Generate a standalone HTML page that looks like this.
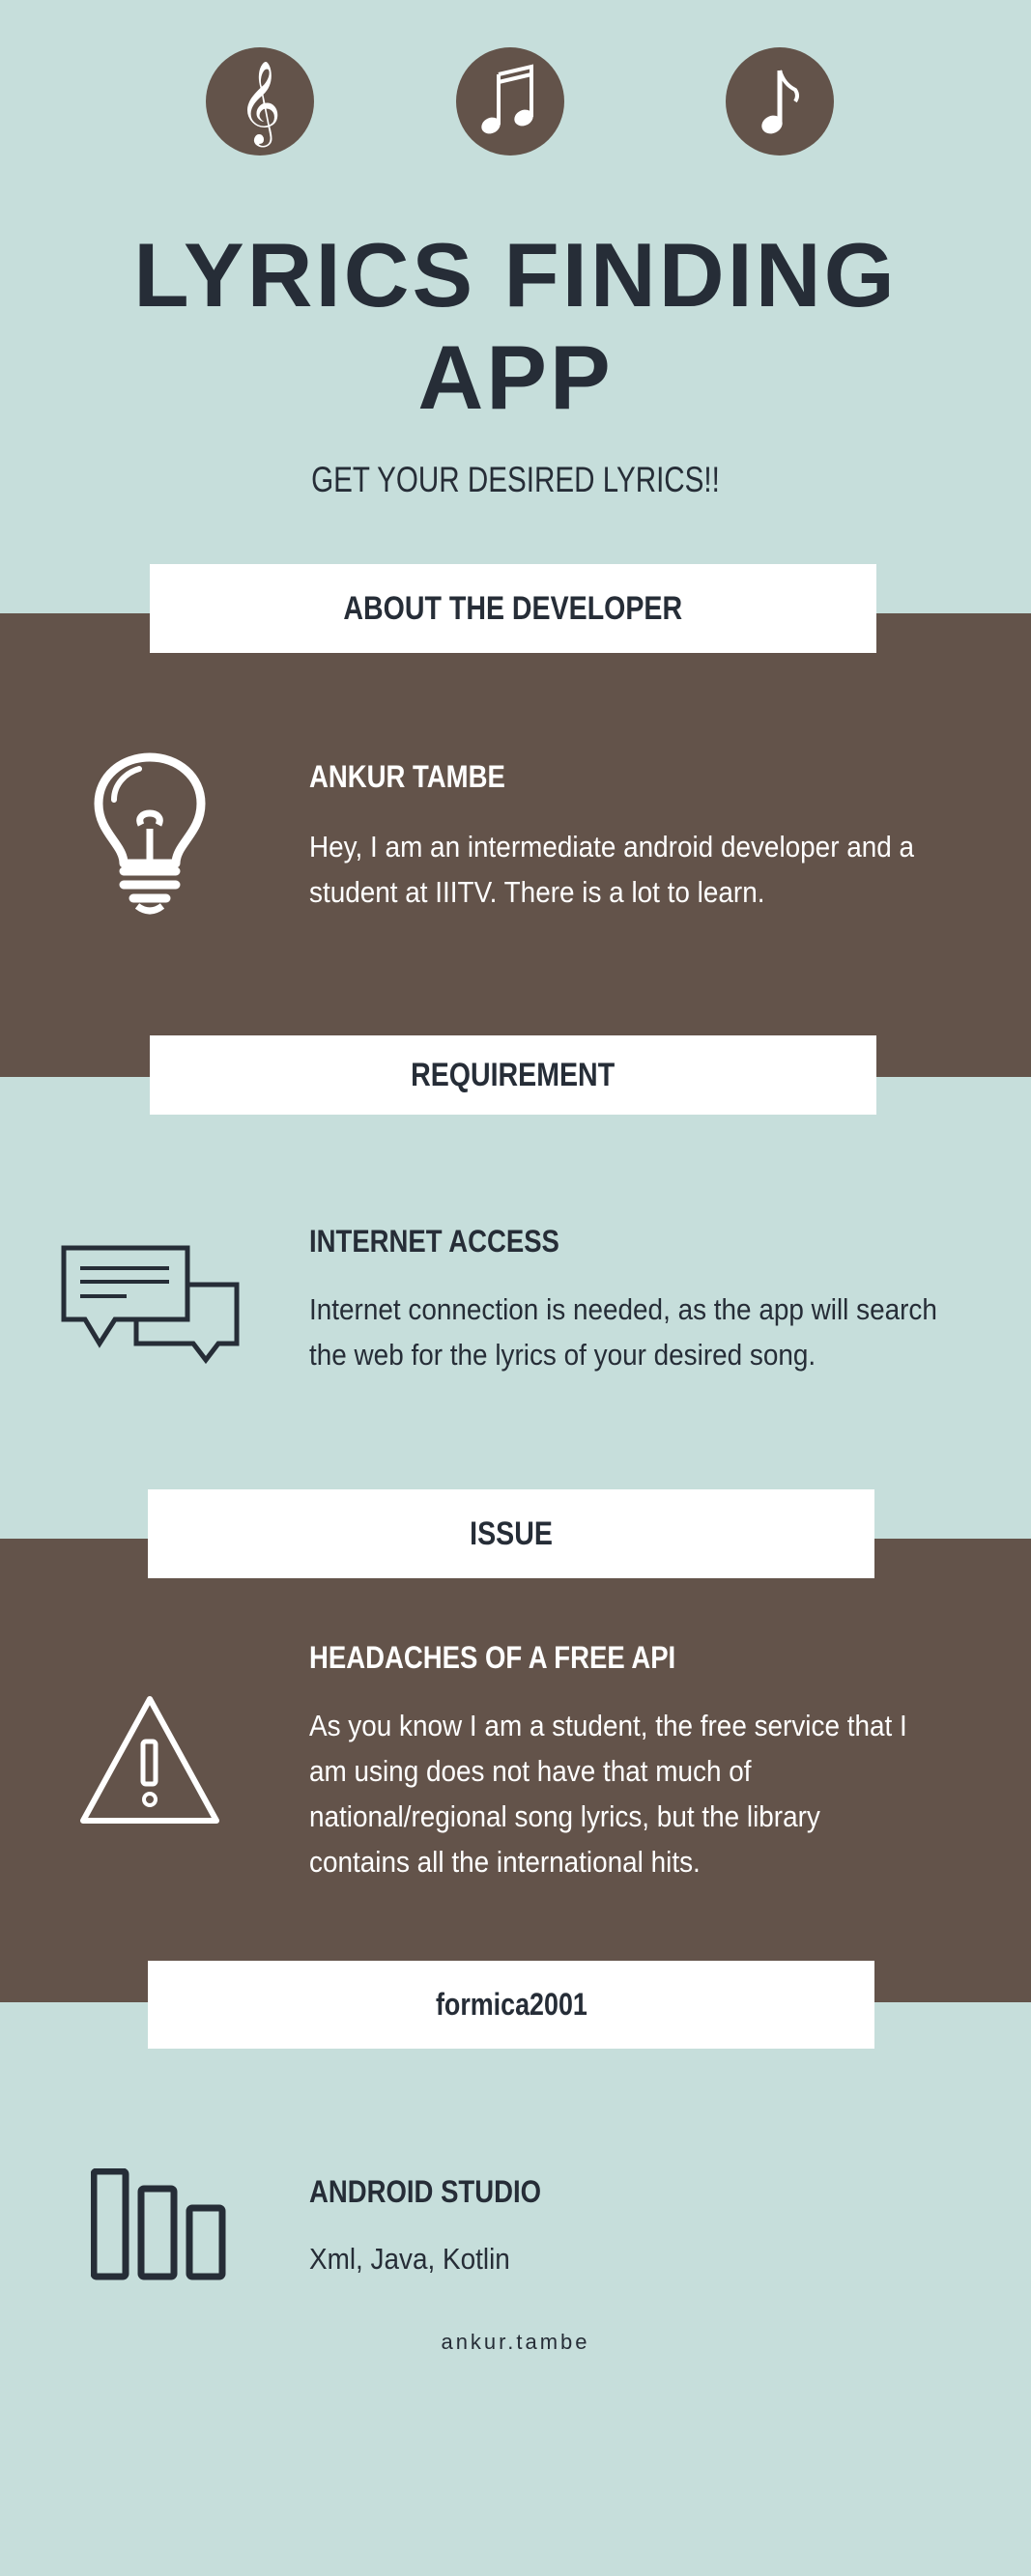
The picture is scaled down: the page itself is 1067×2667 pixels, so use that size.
<!DOCTYPE html>
<html><head><meta charset="utf-8">
<style>
*{margin:0;padding:0;box-sizing:border-box}
body{width:1067px;height:2667px;background:#c6dedb;position:relative;overflow:hidden;font-family:"Liberation Sans",sans-serif;color:#262d37}
.abs{position:absolute}
.band{position:absolute;left:0;width:1067px;background:#63534a}
.circ{position:absolute;width:112px;height:112px;border-radius:50%;background:#63534a;top:49px}
.box{position:absolute;left:155px;width:752px;background:#fff;text-align:center;font-weight:bold;font-size:34px;display:flex;align-items:center;justify-content:center}
.box span{display:inline-block;transform:scaleX(0.84)}
.h{position:absolute;left:320px;font-weight:bold;font-size:32px;transform:scaleX(0.86);transform-origin:left top;white-space:nowrap}
.p{position:absolute;left:320px;font-size:31px;line-height:47px;white-space:nowrap;transform:scaleX(0.9);transform-origin:left top}
.w{color:#fff}
.title{position:absolute;left:0;width:1067px;text-align:center;font-weight:bold;font-size:94px;line-height:105px;letter-spacing:3px}
</style></head><body>
<div class="circ" style="left:213px"><svg width="112" height="112" viewBox="0 0 112 112"><text x="56" y="82" text-anchor="middle" font-size="74" fill="#fff" font-family="DejaVu Sans">𝄞</text></svg></div>
<div class="circ" style="left:472px"><svg width="112" height="112" viewBox="0 0 112 112"><path d="M44 28 L78 20 L78 72" stroke="#fff" stroke-width="4" fill="none"/><path d="M44 28 L44 80" stroke="#fff" stroke-width="4"/><path d="M44 36 L78 28" stroke="#fff" stroke-width="4"/><ellipse cx="36" cy="81" rx="10" ry="8" fill="#fff" transform="rotate(-25 36 81)"/><ellipse cx="70" cy="73" rx="10" ry="8" fill="#fff" transform="rotate(-25 70 73)"/></svg></div>
<div class="circ" style="left:751px"><svg width="112" height="112" viewBox="0 0 112 112"><path d="M56 24 L56 78" stroke="#fff" stroke-width="5"/><path d="M56 24 Q60 38 72 44 Q76 50 72 56" stroke="#fff" stroke-width="4" fill="none"/><ellipse cx="48" cy="80" rx="11" ry="9" fill="#fff" transform="rotate(-25 48 80)"/></svg></div>

<div class="title" style="top:232px">LYRICS FINDING</div>
<div class="title" style="top:338px">APP</div>
<div class="abs" style="top:476px;left:0;width:1067px;text-align:center;font-size:37px;transform:scaleX(0.8)">GET YOUR DESIRED LYRICS!!</div>

<div class="band" style="top:635px;height:480px"></div>
<div class="box" style="top:584px;height:92px"><span>ABOUT THE DEVELOPER</span></div>
<svg class="abs" style="left:94px;top:778px" width="122" height="172" viewBox="0 0 122 172"><path d="M34 116 C34 96 8 84 8 54 C8 26 32 6 61 6 C90 6 114 26 114 54 C114 84 88 96 88 116 Z" fill="none" stroke="#fff" stroke-width="9" stroke-linejoin="round"/><path d="M61 116 L61 80 M52 76 C44 60 78 60 70 76" fill="none" stroke="#fff" stroke-width="7"/><path d="M24 50 C24 34 36 22 50 18" fill="none" stroke="#fff" stroke-width="6" stroke-linecap="round"/><path d="M34 124 L88 124 M34 138 L88 138 M44 152 L78 152" stroke="#fff" stroke-width="9" stroke-linecap="round"/><path d="M48 160 Q61 170 74 160" fill="none" stroke="#fff" stroke-width="7"/></svg>
<div class="h w" style="top:786px">ANKUR TAMBE</div>
<div class="p w" style="top:853px">Hey, I am an intermediate android developer and a<br>student at IIITV. There is a lot to learn.</div>

<div class="box" style="top:1072px;height:82px"><span>REQUIREMENT</span></div>
<svg class="abs" style="left:63px;top:1289px" width="190" height="125" viewBox="0 0 190 125"><path d="M131 41 L182 41 L182 102 L163 102 L150 119 L137 102 L78 102 L78 77" fill="none" stroke="#262d37" stroke-width="5"/><path d="M3 3 L131 3 L131 77 L56 77 L40 102 L25 77 L3 77 Z" fill="none" stroke="#262d37" stroke-width="5"/><path d="M20 24 L112 24 M20 38 L112 38 M20 53 L68 53" stroke="#262d37" stroke-width="4"/></svg>
<div class="h" style="top:1267px">INTERNET ACCESS</div>
<div class="p" style="top:1332px">Internet connection is needed, as the app will search<br>the web for the lyrics of your desired song.</div>

<div class="band" style="top:1593px;height:480px"></div>
<div class="box" style="top:1542px;height:92px;left:153px"><span>ISSUE</span></div>
<svg class="abs" style="left:82px;top:1755px" width="146" height="134" viewBox="0 0 146 134"><path d="M73 4 L142 130 L4 130 Z" fill="none" stroke="#fff" stroke-width="6" stroke-linejoin="round"/><rect x="66" y="48" width="13" height="44" rx="3" fill="none" stroke="#fff" stroke-width="5"/><circle cx="73" cy="108" r="6" fill="none" stroke="#fff" stroke-width="4"/></svg>
<div class="h w" style="top:1698px">HEADACHES OF A FREE API</div>
<div class="p w" style="top:1763px">As you know I am a student, the free service that I<br>am using does not have that much of<br>national/regional song lyrics, but the library<br>contains all the international hits.</div>

<div class="box" style="top:2030px;height:91px;left:153px;font-size:32px"><span>formica2001</span></div>
<svg class="abs" style="left:94px;top:2245px" width="140" height="116" viewBox="0 0 140 116"><rect x="3" y="3" width="33" height="109" rx="3" fill="none" stroke="#262d37" stroke-width="7"/><rect x="52" y="21" width="34" height="91" rx="3" fill="none" stroke="#262d37" stroke-width="7"/><rect x="102" y="41" width="34" height="71" rx="3" fill="none" stroke="#262d37" stroke-width="7"/></svg>
<div class="h" style="top:2251px">ANDROID STUDIO</div>
<div class="p" style="top:2315px">Xml, Java, Kotlin</div>
<div class="abs" style="top:2412px;left:0;width:1067px;text-align:center;font-size:22px;letter-spacing:3px">ankur.tambe</div>
</body></html>
